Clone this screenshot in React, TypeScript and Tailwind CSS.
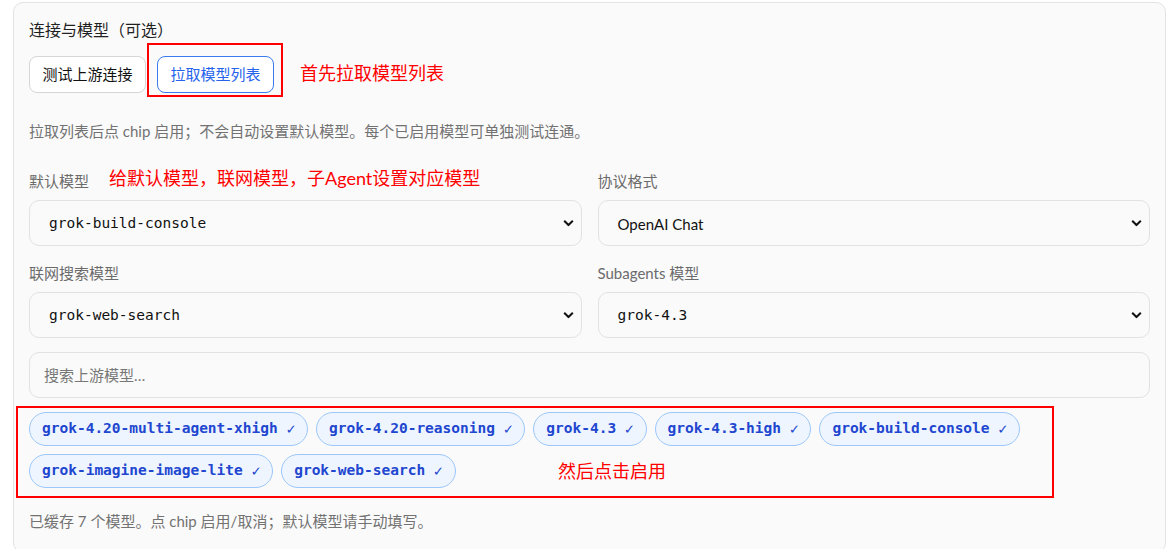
import React from 'react';

const sans = { fontFamily: 'Lato, "Noto Sans CJK SC", sans-serif' };
const mono = { fontFamily: '"DejaVu Sans Mono", "Noto Sans CJK SC", monospace' };

const chips = [
  'grok-4.20-multi-agent-xhigh',
  'grok-4.20-reasoning',
  'grok-4.3',
  'grok-4.3-high',
  'grok-build-console',
  'grok-imagine-image-lite',
  'grok-web-search',
];

const Chevron = () => (
  <svg width="11" height="7" viewBox="0 0 11 7" className="absolute right-[6px] top-1/2 -translate-y-1/2">
    <path d="M1.2 1.2 5.5 5.5 9.8 1.2" fill="none" stroke="#111" strokeWidth="2" />
  </svg>
);

const FakeSelect: React.FC<{ value: string; isMono?: boolean }> = ({ value, isMono = true }) => (
  <div className="relative flex h-[46px] items-center rounded-[10px] border border-[#e2e2e2] bg-[#fafafa] pl-[19px]">
    <span className="pt-[2px] text-[14.5px] text-[#111]" style={isMono ? mono : { ...sans, fontSize: '15px' }}>
      {value}
    </span>
    <div className="absolute right-[1px] top-0 h-full w-[20px]">
      <Chevron />
    </div>
  </div>
);

const Field: React.FC<{ label: string; value: string; isMono?: boolean }> = ({ label, value, isMono }) => (
  <div>
    <div className="mb-[8px] text-[15px] leading-[22px] text-[#6b6b6b]">{label}</div>
    <FakeSelect value={value} isMono={isMono} />
  </div>
);

export default function App() {
  return (
    <div className="min-h-screen bg-white pl-[13px] pt-[2px]" style={sans}>
      <div className="relative w-[1153px] rounded-[10px] border border-[#e3e3e3] bg-[#fafafa] px-[15px] pb-[20px] pt-[15px]">
        <div className="text-[16px] leading-[24px] text-[#1f1f1f]">连接与模型（可选）</div>

        <div className="mt-[14px] flex gap-[11px]">
          <button className="flex h-[37px] w-[117px] items-center justify-center rounded-[8px] border border-[#d6d6d6] bg-white text-[15px] text-[#111]">
            测试上游连接
          </button>
          <button className="flex h-[37px] w-[117px] items-center justify-center rounded-[8px] border border-[#3b7bf0] bg-white text-[15px] text-[#2563eb]">
            拉取模型列表
          </button>
        </div>

        <div className="mt-[27px] text-[15px] leading-[22px] text-[#727272]">
          拉取列表后点 chip 启用；不会自动设置默认模型。每个已启用模型可单独测试连通。
        </div>

        <div className="mt-[28px] grid grid-cols-2 gap-x-[16px] gap-y-[16px]">
          <Field label="默认模型" value="grok-build-console" />
          <Field label="协议格式" value="OpenAI Chat" isMono={false} />
          <Field label="联网搜索模型" value="grok-web-search" />
          <Field label="Subagents 模型" value="grok-4.3" />
        </div>

        <div className="mt-[14px] flex h-[46px] items-center rounded-[10px] border border-[#e2e2e2] bg-[#fafafa] pl-[14px] text-[15px] text-[#777]">
          搜索上游模型…
        </div>

        <div className="mt-[14px] flex flex-wrap gap-[8px]">
          {chips.map((c) => (
            <span
              key={c}
              className="flex h-[34px] items-center rounded-full border border-[#9cc7fb] bg-[#eef5ff] px-[12px] text-[14.5px] font-semibold text-[#2146cf]"
              style={mono}
            >
              {c}
              <span className="ml-[8.7px] inline-block w-[8.7px] text-center text-[15px] font-normal">✓</span>
            </span>
          ))}
        </div>

        <div className="mt-[22px] text-[15px] leading-[22px] text-[#727272]">
          已缓存 7 个模型。点 chip 启用/取消；默认模型请手动填写。
        </div>

        {/* annotations */}
        <div className="pointer-events-none absolute left-[133px] top-[40px] h-[54px] w-[136px] border-2 border-[#ff0000]" />
        <div className="absolute left-[286px] top-[58px] text-[18px] leading-[24px] text-[#ff0000]">首先拉取模型列表</div>
        <div className="absolute left-[95px] top-[163px] text-[18px] leading-[24px] text-[#ff0000]">
          给默认模型，联网模型，子Agent设置对应模型
        </div>
        <div className="pointer-events-none absolute left-[2px] top-[403px] h-[92px] w-[1038px] border-2 border-[#ff0000]" />
        <div className="absolute left-[544px] top-[456px] text-[18px] leading-[24px] text-[#ff0000]">然后点击启用</div>
      </div>
    </div>
  );
}
